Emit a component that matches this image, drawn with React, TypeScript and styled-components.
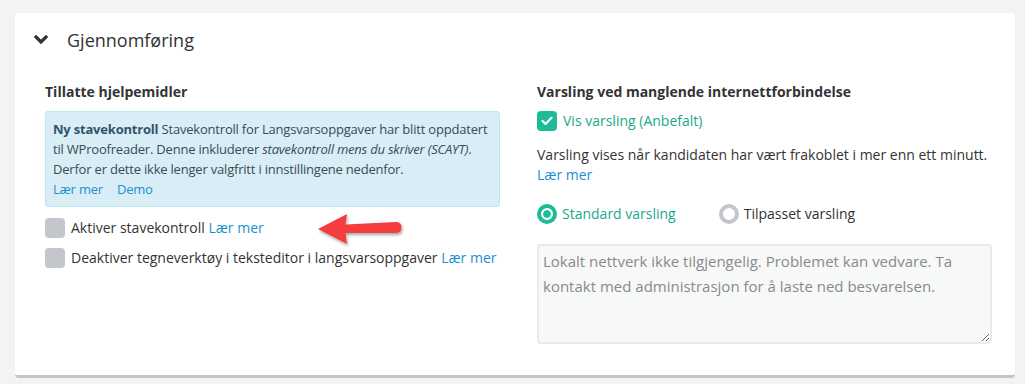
import React from 'react'
import styled, { createGlobalStyle } from 'styled-components'

const GlobalStyle = createGlobalStyle`
	body {
		margin: 0;
		background: #f3f3f3;
		font-family: 'Open Sans', 'Noto Sans', sans-serif;
		color: #333;
	}
`

const ChevronDown = (): JSX.Element => (
	<svg width="14" height="10" viewBox="0 0 14 10">
		<path d="M2 2 L7 7 L12 2" fill="none" stroke="#333" strokeWidth="3.2" strokeLinecap="square" />
	</svg>
)

const Check = (): JSX.Element => (
	<svg width="12" height="10" viewBox="0 0 12 10">
		<path d="M1.5 5 L4.5 8 L10.5 1.8" fill="none" stroke="#fff" strokeWidth="2.2" strokeLinecap="round" strokeLinejoin="round" />
	</svg>
)

const RedArrow = (): JSX.Element => (
	<svg width="92" height="40" viewBox="0 0 92 40">
		<defs>
			<filter id="arrowShadow" x="-20%" y="-30%" width="140%" height="170%">
				<feDropShadow dx="1" dy="2" stdDeviation="1.5" floodColor="#000" floodOpacity="0.35" />
			</filter>
		</defs>
		<g filter="url(#arrowShadow)">
			<path
				d="M2 18 L31 3 L29.5 13.5 L80 11 Q85.5 11 85.5 16.5 Q85.5 22 80 22 L29.5 22 L31 33 Z"
				fill="#f53d3f"
			/>
		</g>
	</svg>
)

export default function App(): JSX.Element {
	return (
		<>
			<GlobalStyle />
			<Page>
				<Card>
					<Header>
						<ChevronDown />
						<Title>Gjennomføring</Title>
					</Header>
					<Columns>
						<Column>
							<SectionTitle>Tillatte hjelpemidler</SectionTitle>
							<InfoBox>
								<strong>Ny stavekontroll</strong> Stavekontroll for Langsvarsoppgaver har blitt oppdatert til
								WProofreader. Denne inkluderer <em>stavekontroll mens du skriver (SCAYT)</em>. Derfor er dette
								ikke lenger valgfritt i innstillingene nedenfor.
								<InfoLinks>
									<Link>Lær mer</Link>
									<Link>Demo</Link>
								</InfoLinks>
							</InfoBox>
							<CheckRow>
								<Box />
								<RowText>
									Aktiver stavekontroll <Link>Lær mer</Link>
								</RowText>
								<ArrowMark>
									<RedArrow />
								</ArrowMark>
							</CheckRow>
							<CheckRow>
								<Box />
								<RowText>
									Deaktiver tegneverktøy i teksteditor i langsvarsoppgaver <Link>Lær mer</Link>
								</RowText>
							</CheckRow>
						</Column>
						<Column>
							<SectionTitle>Varsling ved manglende internettforbindelse</SectionTitle>
							<CheckRow $tight>
								<Box $checked>
									<Check />
								</Box>
								<RowText $active>Vis varsling (Anbefalt)</RowText>
							</CheckRow>
							<Description>
								Varsling vises når kandidaten har vært frakoblet i mer enn ett minutt.
								<br />
								<Link>Lær mer</Link>
							</Description>
							<RadioGroup>
								<RadioOption>
									<Radio $checked />
									<RowText $active>Standard varsling</RowText>
								</RadioOption>
								<RadioOption>
									<Radio />
									<RowText>Tilpasset varsling</RowText>
								</RadioOption>
							</RadioGroup>
							<MessageArea
								readOnly
								defaultValue="Lokalt nettverk ikke tilgjengelig. Problemet kan vedvare. Ta kontakt med administrasjon for å laste ned besvarelsen."
							/>
						</Column>
					</Columns>
				</Card>
			</Page>
		</>
	)
}

const Page = styled.div`
	padding: 13px 10px 0 15px;
	height: 384px;
	box-sizing: border-box;
	overflow: hidden;
`

const Card = styled.section`
	background: #fff;
	border-radius: 4px;
	border-bottom: 3px solid #c2c5c9;
	height: 365px;
	box-sizing: border-box;
`

const Header = styled.div`
	display: flex;
	align-items: center;
	gap: 19px;
	padding: 15px 0 0 19px;
	height: 24px;
`

const Title = styled.h2`
	margin: 0;
	font-size: 18px;
	font-weight: 400;
	color: #333;
	line-height: 22px;
`

const Columns = styled.div`
	display: grid;
	grid-template-columns: 455px 455px;
	column-gap: 37px;
	padding: 30px 0 0 30px;
`

const Column = styled.div`
	display: flex;
	flex-direction: column;
`

const SectionTitle = styled.h3`
	margin: 0 0 9px;
	font-size: 14px;
	font-weight: 700;
	line-height: 20px;
	color: #333;
`

const InfoBox = styled.div`
	background: #d9edf7;
	border: 1px solid #bce8f1;
	border-radius: 3px;
	padding: 7px 8px 7px 7px;
	font-size: 13px;
	letter-spacing: -0.2px;
	line-height: 20px;
	color: #3a4a55;
	margin-bottom: 11px;

	strong {
		font-weight: 700;
		color: #31546b;
	}
`

const InfoLinks = styled.div`
	display: flex;
	gap: 14px;
`

const Link = styled.a`
	color: #1a8fd0;
	cursor: pointer;
`

const CheckRow = styled.label<{ $tight?: boolean }>`
	position: relative;
	display: flex;
	align-items: center;
	gap: 6px;
	height: 20px;
	margin-bottom: ${({ $tight }) => ($tight ? '14px' : '10px')};
`

const Box = styled.span<{ $checked?: boolean }>`
	width: 20px;
	height: 20px;
	border-radius: 4px;
	background: ${({ $checked }) => ($checked ? '#1dbc97' : '#c3c6cb')};
	display: inline-flex;
	align-items: center;
	justify-content: center;
	flex-shrink: 0;
`

const RowText = styled.span<{ $active?: boolean }>`
	font-size: 14px;
	line-height: 20px;
	color: ${({ $active }) => ($active ? '#1aa98b' : '#333')};
`

const ArrowMark = styled.span`
	position: absolute;
	left: 271px;
	top: -7px;
	line-height: 0;
`

const Description = styled.p`
	margin: 0 0 19px;
	font-size: 14px;
	line-height: 20px;
`

const RadioGroup = styled.div`
	display: flex;
	gap: 43px;
	margin-bottom: 20px;
`

const RadioOption = styled.label`
	display: flex;
	align-items: center;
	gap: 5px;
`

const Radio = styled.span<{ $checked?: boolean }>`
	width: 20px;
	height: 20px;
	border-radius: 50%;
	box-sizing: border-box;
	border: 4px solid ${({ $checked }) => ($checked ? '#1dbc97' : '#c3c6cb')};
	background: ${({ $checked }) => ($checked ? 'radial-gradient(circle, #1dbc97 0 3.5px, #fff 4px)' : '#fff')};
`

const MessageArea = styled.textarea`
	width: 455px;
	height: 100px;
	box-sizing: border-box;
	border: 2px solid #e8ebea;
	border-radius: 4px;
	background: #f7f9f9;
	padding: 3px 4px;
	font-family: 'Open Sans', 'Noto Sans', sans-serif;
	font-size: 15px;
	line-height: 25px;
	color: #8a8a8a;
	resize: vertical;
	outline: none;
`
